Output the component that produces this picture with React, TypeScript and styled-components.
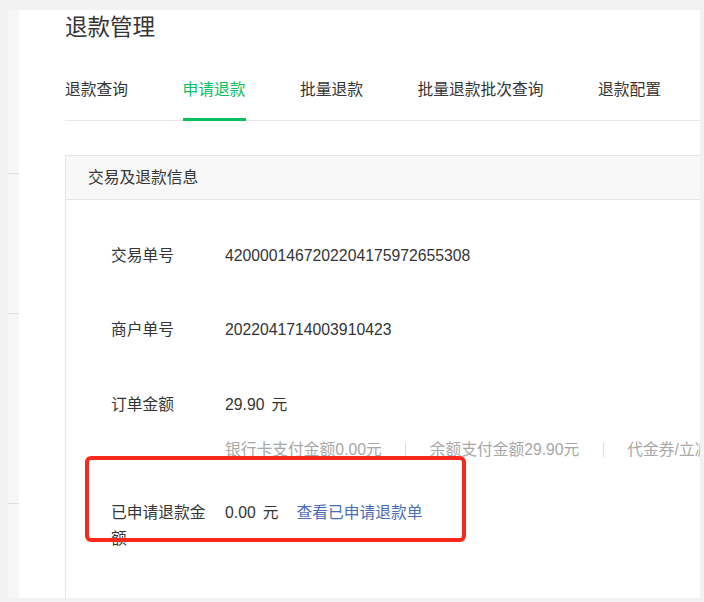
import React from "react";
import styled, { createGlobalStyle } from "styled-components";

const GlobalStyle = createGlobalStyle`
  html, body {
    margin: 0;
    padding: 0;
    background: #f2f2f2;
  }
  body {
    font-family: "Liberation Sans", "Noto Sans CJK SC", sans-serif;
    color: #353535;
  }
  * { box-sizing: border-box; }
`;

const Page = styled.div`
  display: flex;
  align-items: flex-start;
  height: 602px;
  padding: 10px 4px 0 8px;
  overflow: hidden;
`;

const Sidebar = styled.nav`
  width: 11px;
  height: 588px;
  flex-shrink: 0;
  background: #f7f7f7;
  overflow: hidden;
`;

const SideGroup = styled.div<{ $h: number }>`
  height: ${(p) => p.$h}px;
  border-bottom: 1px solid #e0e0e0;
`;

const Main = styled.main`
  flex: 1;
  height: 588px;
  background: #fff;
  overflow: hidden;
  padding-left: 46px;
`;

const Title = styled.h1`
  margin: 0;
  height: 36px;
  line-height: 36px;
  font-size: 22.5px;
  font-weight: normal;
  color: #353535;
  white-space: nowrap;
`;

const TabList = styled.div`
  display: flex;
  gap: 54.5px;
  border-bottom: 1px solid #e7e7e7;
  white-space: nowrap;
`;

const Tab = styled.div<{ $active?: boolean }>`
  font-size: 15.75px;
  line-height: 24px;
  padding: 32px 0 16px;
  margin-bottom: -1px;
  border-bottom: 3px solid ${(p) => (p.$active ? "#07c160" : "transparent")};
  color: ${(p) => (p.$active ? "#07c160" : "#353535")};
  cursor: pointer;
`;

const Card = styled.section`
  margin-top: 34px;
  width: 1000px;
  min-height: 600px;
  border: 1px solid #e5e5e5;
`;

const CardHeader = styled.div`
  height: 44px;
  line-height: 43px;
  padding-left: 22px;
  background: #f8f8f8;
  border-bottom: 1px solid #e5e5e5;
  font-size: 15.75px;
  color: #353535;
`;

const CardBody = styled.div`
  padding: 43px 0 0 45px;
`;

const Field = styled.div<{ $mt: number }>`
  position: relative;
  display: flex;
  align-items: flex-start;
  margin-top: ${(p) => p.$mt}px;
  font-size: 15.75px;
  line-height: 26px;
`;

const Label = styled.div`
  width: 100px;
  margin-right: 14px;
  flex-shrink: 0;
  color: #353535;
`;

const Value = styled.div`
  display: flex;
  align-items: baseline;
  white-space: nowrap;
  color: #353535;
`;

const Unit = styled.span`
  margin-left: 7px;
`;

const Link = styled.a`
  margin-left: 18px;
  color: #4b6cb7;
  text-decoration: none;
  cursor: pointer;
`;

const SubLine = styled.div<{ $mt: number }>`
  display: flex;
  align-items: center;
  margin-top: ${(p) => p.$mt}px;
  padding-left: 114px;
  font-size: 15.75px;
  line-height: 26px;
  color: #a8a8a8;
  white-space: nowrap;
`;

const Divider = styled.span`
  display: inline-block;
  width: 1px;
  height: 14px;
  margin: 0 23.5px;
  background: #dcdcdc;
`;

const Highlight = styled.div`
  position: absolute;
  left: -26px;
  top: -44px;
  width: 381px;
  height: 86px;
  border: 4px solid #f8281b;
  border-radius: 6px;
  pointer-events: none;
`;

const tabs = ["退款查询", "申请退款", "批量退款", "批量退款批次查询", "退款配置"];

export default function App() {
  return (
    <>
      <GlobalStyle />
      <Page>
        <Sidebar>
          <SideGroup $h={164} />
          <SideGroup $h={140} />
          <SideGroup $h={190} />
        </Sidebar>
        <Main>
          <Title>退款管理</Title>
          <TabList>
            {tabs.map((t) => (
              <Tab key={t} $active={t === "申请退款"}>
                {t}
              </Tab>
            ))}
          </TabList>
          <Card>
            <CardHeader>交易及退款信息</CardHeader>
            <CardBody>
              <Field $mt={0}>
                <Label>交易单号</Label>
                <Value>4200001467202204175972655308</Value>
              </Field>
              <Field $mt={48}>
                <Label>商户单号</Label>
                <Value>2022041714003910423</Value>
              </Field>
              <Field $mt={49}>
                <Label>订单金额</Label>
                <Value>
                  29.90<Unit>元</Unit>
                </Value>
              </Field>
              <SubLine $mt={19}>
                <span>银行卡支付金额0.00元</span>
                <Divider />
                <span>余额支付金额29.90元</span>
                <Divider />
                <span>代金券/立减优惠金额0.00元</span>
              </SubLine>
              <Field $mt={37}>
                <Label>已申请退款金额</Label>
                <Value>
                  0.00<Unit>元</Unit>
                  <Link>查看已申请退款单</Link>
                </Value>
                <Highlight />
              </Field>
            </CardBody>
          </Card>
        </Main>
      </Page>
    </>
  );
}
